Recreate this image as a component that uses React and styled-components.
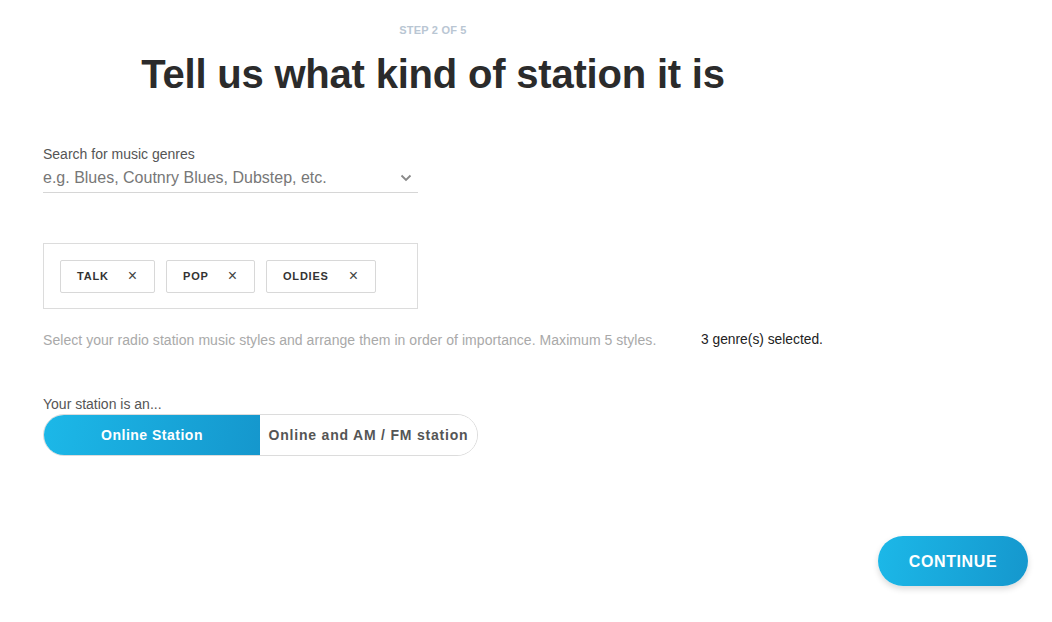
import React, { useState } from 'react'
import styled, { createGlobalStyle } from 'styled-components'

const GlobalStyle = createGlobalStyle`
  body {
    margin: 0;
    background: #fff;
    font-family: "Liberation Sans", Arial, sans-serif;
    color: #333;
  }
`

const Page = styled.div`
  position: relative;
  width: 1052px;
  height: 622px;
  box-sizing: border-box;
  padding: 24px 0 0 43px;
`

const Column = styled.div`
  width: 780px;
  display: flex;
  flex-direction: column;
`

const Step = styled.div`
  text-align: center;
  font-size: 11px;
  font-weight: bold;
  color: #b9c6d3;
  letter-spacing: 0.2px;
`

const Title = styled.h1`
  margin: 16px 0 0;
  text-align: center;
  font-size: 40px;
  font-weight: bold;
  color: #2b2b2b;
  letter-spacing: -0.2px;
`

const Label = styled.div`
  font-size: 14px;
  color: #555;
  margin-top: ${p => p.top || 0}px;
`

const SearchField = styled.div`
  width: 375px;
  height: 30px;
  display: flex;
  align-items: center;
  justify-content: space-between;
  border-bottom: 1px solid #d6d6d6;
  margin-top: 1px;
  box-sizing: border-box;
  padding-right: 6px;
`

const Placeholder = styled.span`
  font-size: 16px;
  color: #777;
`

const TagBox = styled.div`
  width: 375px;
  height: 66px;
  box-sizing: border-box;
  border: 1px solid #dcdcdc;
  margin-top: 50px;
  display: flex;
  align-items: center;
  gap: 11px;
  padding: 0 16px;
`

const Tag = styled.div`
  width: ${p => p.w}px;
  height: 33px;
  box-sizing: border-box;
  border: 1px solid #d8d8d8;
  border-radius: 2px;
  display: flex;
  align-items: center;
  justify-content: space-between;
  padding: 0 16px;
  font-size: 11px;
  font-weight: bold;
  letter-spacing: 0.8px;
  color: #333;
`

const Close = styled.span`
  font-size: 16px;
  font-weight: normal;
  color: #444;
  line-height: 1;
`

const HelpRow = styled.div`
  display: flex;
  margin-top: 23px;
  font-size: 14px;
  white-space: nowrap;
`

const Help = styled.span`
  color: #a9a9a9;
  width: 658px;
  flex-shrink: 0;
  letter-spacing: 0.05px;
`

const Count = styled.span`
  color: #222;
  font-size: 13.8px;
`

const Toggle = styled.div`
  display: flex;
  width: 435px;
  height: 42px;
  margin-top: 2px;
  box-sizing: border-box;
  border: 1px solid #dcdcdc;
  border-radius: 21px;
  overflow: hidden;
`

const Option = styled.button`
  border: none;
  margin: 0;
  padding: 0;
  width: ${p => p.w}px;
  font-family: inherit;
  font-size: 14px;
  font-weight: bold;
  letter-spacing: ${p => (p.active ? 0.5 : 0.8)}px;
  cursor: pointer;
  color: ${p => (p.active ? '#fff' : '#555')};
  background: ${p => (p.active ? 'linear-gradient(100deg, #1cb8e8 0%, #1597cd 100%)' : '#fff')};
`

const Continue = styled.button`
  position: absolute;
  right: 24px;
  bottom: 36px;
  width: 150px;
  height: 50px;
  border: none;
  border-radius: 25px;
  padding-top: 3px;
  background: linear-gradient(100deg, #1cb8e8 0%, #1597cd 100%);
  box-shadow: 0 3px 6px rgba(0, 0, 0, 0.15);
  color: #fff;
  font-family: inherit;
  font-size: 16px;
  font-weight: bold;
  letter-spacing: 0.6px;
  cursor: pointer;
`

const Chevron = () => (
  <svg width="12" height="8" viewBox="0 0 12 8">
    <path d="M1.5 1.5 L6 6 L10.5 1.5" fill="none" stroke="#888" strokeWidth="1.8" />
  </svg>
)

const genres = [
  { name: 'TALK', w: 95 },
  { name: 'POP', w: 89 },
  { name: 'OLDIES', w: 110 },
]

export default function App() {
  const [kind, setKind] = useState('online')
  return (
    <Page>
      <GlobalStyle />
      <Column>
        <Step>STEP 2 OF 5</Step>
        <Title>Tell us what kind of station it is</Title>

        <Label top={49}>Search for music genres</Label>
        <SearchField>
          <Placeholder>e.g. Blues, Coutnry Blues, Dubstep, etc.</Placeholder>
          <Chevron />
        </SearchField>

        <TagBox>
          {genres.map(g => (
            <Tag key={g.name} w={g.w}>
              {g.name}
              <Close>×</Close>
            </Tag>
          ))}
        </TagBox>

        <HelpRow>
          <Help>Select your radio station music styles and arrange them in order of importance. Maximum 5 styles.</Help>
          <Count>3 genre(s) selected.</Count>
        </HelpRow>

        <Label top={48}>Your station is an...</Label>
        <Toggle>
          <Option w={217} active={kind === 'online'} onClick={() => setKind('online')}>
            Online Station
          </Option>
          <Option w={218} active={kind === 'amfm'} onClick={() => setKind('amfm')}>
            Online and AM / FM station
          </Option>
        </Toggle>
      </Column>
      <Continue>CONTINUE</Continue>
    </Page>
  )
}
